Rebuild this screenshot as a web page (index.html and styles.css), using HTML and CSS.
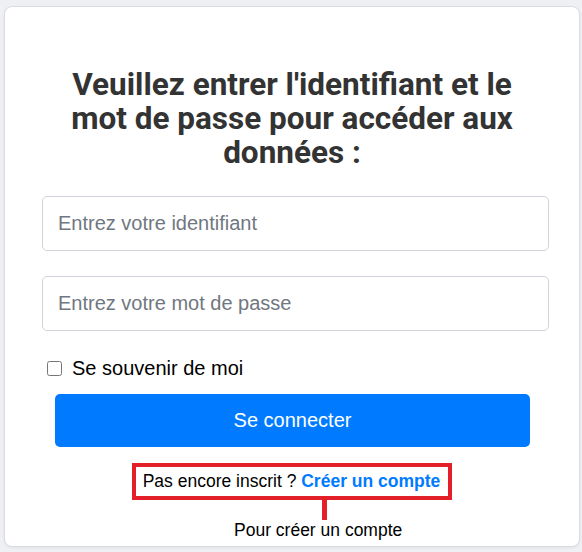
FILE: index.html
```html
<!DOCTYPE html>
<html lang="fr">
<head>
<meta charset="utf-8">
<title>Connexion</title>
<link rel="stylesheet" href="styles.css">
</head>
<body>
<div class="card">
  <h1 class="title">Veuillez entrer l'identifiant et le mot de passe pour accéder aux données :</h1>
  <form class="form">
    <input class="field" type="text" placeholder="Entrez votre identifiant">
    <input class="field" type="password" placeholder="Entrez votre mot de passe">
    <label class="remember"><input class="check" type="checkbox"><span>Se souvenir de moi</span></label>
    <button class="btn" type="button">Se connecter</button>
  </form>
  <div class="signup">
    <p class="signup-box">Pas encore inscrit ? <a class="signup-link" href="#">Créer un compte</a></p>
  </div>
  <div class="annot-line"></div>
  <p class="annot-text">Pour créer un compte</p>
</div>
</body>
</html>
```
FILE: styles.css
```css
html, body {
  margin: 0;
  padding: 0;
}
body {
  background: #eef0f4;
  font-family: "Liberation Sans", Arial, sans-serif;
  width: 582px;
  height: 552px;
  overflow: hidden;
}
.card {
  box-sizing: border-box;
  margin: 6px 0 0 4px;
  width: 576px;
  height: 541px;
  background: #fff;
  border: 1px solid #d9dce1;
  border-radius: 8px;
  box-shadow: 0 1px 3px rgba(0, 0, 0, 0.06);
  padding-top: 61px;
  overflow: hidden;
}
.title {
  margin: 0 auto;
  width: 474px;
  height: 102px;
  font-family: Roboto, "Liberation Sans", sans-serif;
  font-weight: 700;
  font-size: 31.5px;
  line-height: 34px;
  color: #333;
  text-align: center;
}
.form {
  margin: 26px 0 0 37px;
  width: 507px;
  display: flex;
  flex-direction: column;
}
.field {
  box-sizing: border-box;
  height: 55px;
  width: 507px;
  border: 1px solid #ced4da;
  border-radius: 5px;
  padding: 0 15px;
  font-family: "Liberation Sans", Arial, sans-serif;
  font-size: 20px;
  color: #333;
  margin: 0 0 25px 0;
  outline: none;
}
.field::placeholder {
  color: #707780;
}
.remember {
  display: flex;
  align-items: center;
  gap: 10px;
  height: 24px;
  margin: 0 0 14px 5px;
  font-size: 20px;
  color: #000;
}
.check {
  margin: 0;
  width: 15px;
  height: 15px;
}
.btn {
  box-sizing: border-box;
  margin-left: 13px;
  width: 475px;
  height: 53px;
  border: none;
  border-radius: 5px;
  background: #007bff;
  color: #fff;
  font-family: "Liberation Sans", Arial, sans-serif;
  font-size: 20px;
  padding: 0;
}
.signup {
  display: flex;
  justify-content: center;
  margin-top: 16px;
}
.signup-box {
  margin: 0;
  border: 4px solid #e3202a;
  padding: 4px 8px 4px 7px;
  font-size: 17.5px;
  line-height: 21px;
  color: #000;
}
.signup-link {
  color: #007bff;
  font-weight: 700;
  text-decoration: none;
}
.annot-line {
  margin-left: 317px;
  width: 5px;
  height: 20px;
  background: #e3202a;
}
.annot-text {
  margin: 0 0 0 229px;
  font-size: 17.5px;
  line-height: 21px;
  color: #000;
}
```
